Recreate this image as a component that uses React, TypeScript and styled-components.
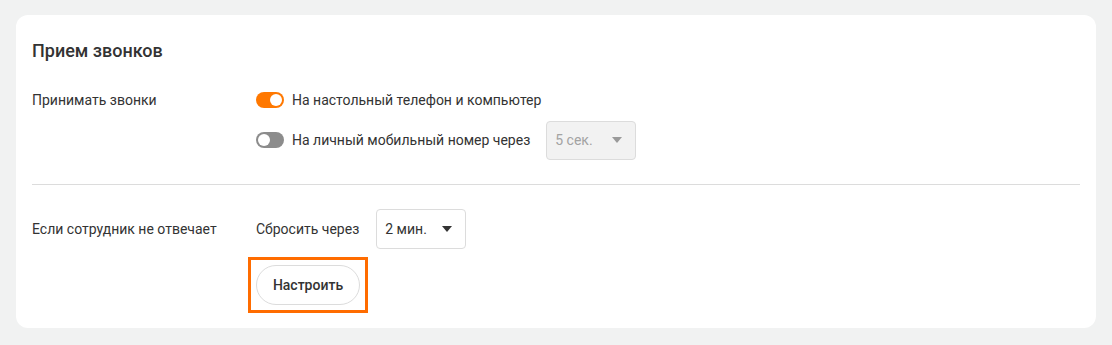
import React from "react";
import styled, { createGlobalStyle } from "styled-components";

const Global = createGlobalStyle`
  html, body { margin: 0; padding: 0; background: #f1f2f2; }
  body { font-family: Roboto, "Noto Sans", Arial, sans-serif; color: #333; }
  * { box-sizing: border-box; }
`;

const Page = styled.div`
  padding: 15px 16px 17px 16px;
`;

const Card = styled.section`
  background: #fff;
  border-radius: 12px;
  padding: 24px 16px 23px 16px;
`;

const Title = styled.h2`
  margin: 0 0 17px 0;
  font-size: 18px;
  line-height: 24px;
  font-weight: 500;
  color: #333;
`;

const Section = styled.div<{ $pad?: string }>`
  display: grid;
  grid-template-columns: 224px 1fr;
  padding: ${(p) => p.$pad || "0"};
`;

const Label = styled.div`
  font-size: 14px;
  line-height: 40px;
  height: 40px;
  color: #333;
`;

const Options = styled.div`
  display: flex;
  flex-direction: column;
  align-items: flex-start;
`;

const Row = styled.div<{ $gap?: number }>`
  display: flex;
  align-items: center;
  height: 40px;
  gap: ${(p) => p.$gap ?? 8}px;
`;

const Toggle = styled.span<{ $on?: boolean }>`
  position: relative;
  display: inline-block;
  width: 28px;
  height: 16px;
  border-radius: 8px;
  background: ${(p) => (p.$on ? "#ff7800" : "#8c8c8c")};
  &::after {
    content: "";
    position: absolute;
    top: 2px;
    left: ${(p) => (p.$on ? "14px" : "2px")};
    width: 12px;
    height: 12px;
    border-radius: 50%;
    background: #fff;
  }
`;

const OptionText = styled.span`
  font-size: 14px;
  color: #333;
`;

const Select = styled.div<{ $disabled?: boolean }>`
  display: flex;
  align-items: center;
  justify-content: space-between;
  width: 90px;
  height: ${(p) => (p.$disabled ? 39 : 40)}px;
  margin-left: ${(p) => (p.$disabled ? 8 : 0)}px;
  padding: 0 13px 0 8px;
  border: 1px solid #dcdcdc;
  border-radius: 4px;
  background: ${(p) => (p.$disabled ? "#f2f2f2" : "#fff")};
  color: ${(p) => (p.$disabled ? "#a3a3a3" : "#333")};
  font-size: 14px;
`;

const Caret = styled.span<{ $disabled?: boolean }>`
  width: 0;
  height: 0;
  border-left: 5.5px solid transparent;
  border-right: 5.5px solid transparent;
  border-top: 6px solid ${(p) => (p.$disabled ? "#9a9a9a" : "#333")};
`;

const Divider = styled.hr`
  margin: 0;
  border: none;
  border-top: 1px solid #dcdcdc;
`;

const Highlight = styled.div`
  position: relative;
  margin-top: 16px;
  &::after {
    content: "";
    position: absolute;
    inset: -8px;
    border: 3px solid #ff6c00;
    pointer-events: none;
  }
`;

const Button = styled.button`
  display: block;
  height: 40px;
  width: 104px;
  border-radius: 20px;
  border: 1px solid #dcdcdc;
  background: #fff;
  font-family: inherit;
  font-size: 14px;
  font-weight: 500;
  color: #333;
  cursor: pointer;
`;

export default function App() {
  return (
    <Page>
      <Global />
      <Card>
        <Title>Прием звонков</Title>
        <Section $pad="0 0 24px 0">
          <Label>Принимать звонки</Label>
          <Options>
            <Row>
              <Toggle $on />
              <OptionText>На настольный телефон и компьютер</OptionText>
            </Row>
            <Row>
              <Toggle />
              <OptionText>На личный мобильный номер через</OptionText>
              <Select $disabled>
                5 сек.
                <Caret $disabled />
              </Select>
            </Row>
          </Options>
        </Section>
        <Divider />
        <Section $pad="24px 0 0 0">
          <Label>Если сотрудник не отвечает</Label>
          <Options>
            <Row $gap={17}>
              <OptionText>Сбросить через</OptionText>
              <Select>
                2 мин.
                <Caret />
              </Select>
            </Row>
            <Highlight>
              <Button>Настроить</Button>
            </Highlight>
          </Options>
        </Section>
      </Card>
    </Page>
  );
}
